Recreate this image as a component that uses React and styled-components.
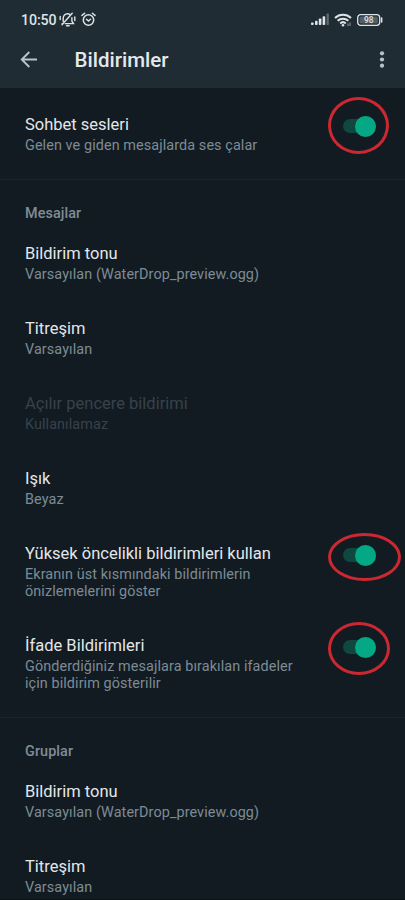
import styled, { createGlobalStyle } from "styled-components"

const GlobalStyle = createGlobalStyle`
  * {
    box-sizing: border-box;
  }

  body {
    margin: 0;
    background: #121b22;
    font-family: Roboto, "Noto Sans", sans-serif;
  }
`

const Screen = styled.div`
  display: flex;
  flex-direction: column;
  height: 900px;
  overflow: hidden;
  background: #121b22;
  border-bottom: 1px solid #0b1117;
`

const Header = styled.header`
  flex: none;
  height: 88px;
  background: #1f2c34;
`

const StatusBar = styled.div`
  display: flex;
  align-items: center;
  height: 38px;
  padding: 1px 22px 0 21px;
  color: #dde3e6;
`

const Clock = styled.span`
  width: 38px;
  font-size: 14.2px;
  font-weight: 500;
  letter-spacing: -0.1px;
  white-space: nowrap;
`

const StatusIcons = styled.div`
  display: flex;
  align-items: center;
  gap: ${({ $gap }) => $gap}px;
  margin-left: ${({ $end }) => ($end ? "auto" : 0)};
`

const Toolbar = styled.div`
  display: flex;
  align-items: center;
  height: 43px;
  padding: 0 20px;
  color: #b9c3c8;
`

const Title = styled.h1`
  flex: 1;
  margin: 0 0 0 36.5px;
  color: #e4e9ec;
  font-size: 20.5px;
  font-weight: 500;
  line-height: 24px;
`

const Section = styled.section`
  flex: none;
  padding: ${({ $first }) => ($first ? "8.5px 0 7.5px" : "0 0 7.5px")};
  border-bottom: 1px solid #1a242b;
`

const SectionTitle = styled.h2`
  margin: 0;
  padding: 24.5px 25px 4px;
  color: #7f8d97;
  font-size: 14.4px;
  font-weight: 500;
  letter-spacing: 0.08px;
  line-height: 17px;
`

const Row = styled.div`
  display: flex;
  justify-content: space-between;
  padding: 18px 29px 18px 25px;
`

const RowText = styled.div`
  width: 280px;
`

const RowTitle = styled.div`
  margin-bottom: 2.5px;
  color: ${({ $disabled }) => ($disabled ? "#37424a" : "#e2e7ea")};
  font-size: 16.5px;
  line-height: 19.5px;
  white-space: nowrap;
`

const RowSummary = styled.div`
  color: ${({ $disabled }) => ($disabled ? "#37424a" : "#7d8b94")};
  font-size: 14.4px;
  letter-spacing: 0.09px;
  line-height: 17px;
`

const Switch = styled.div`
  position: relative;
  display: flex;
  align-items: center;
  justify-content: flex-end;
  width: 33px;
  height: 21px;
  margin-top: 1px;

  &::before {
    content: "";
    width: 33px;
    height: 14px;
    border-radius: 7px;
    background: #0f483f;
  }
`

const Thumb = styled.span`
  position: absolute;
  right: 0;
  width: 21px;
  height: 21px;
  border-radius: 50%;
  background: #05a884;
`

// hand-drawn style ring laid over a switch
const Ring = styled.span`
  position: absolute;
  left: -15px;
  top: ${({ $top }) => $top}px;
  width: ${({ $width }) => $width}px;
  height: ${({ $height }) => $height}px;
  border: 3px solid #cb2832;
  border-radius: 50%;
`

const toneRow = { title: "Bildirim tonu", summary: "Varsayılan (WaterDrop_preview.ogg)" }
const vibrationRow = { title: "Titreşim", summary: "Varsayılan" }

const sections = [
  {
    rows: [
      {
        title: "Sohbet sesleri",
        summary: "Gelen ve giden mesajlarda ses çalar",
        ring: { top: -19, width: 61, height: 57 },
      },
    ],
  },
  {
    title: "Mesajlar",
    rows: [
      toneRow,
      vibrationRow,
      { title: "Açılır pencere bildirimi", summary: "Kullanılamaz", disabled: true },
      { title: "Işık", summary: "Beyaz" },
      {
        title: "Yüksek öncelikli bildirimleri kullan",
        summary: (
          <>
            Ekranın üst kısmındaki bildirimlerin
            <br />
            önizlemelerini göster
          </>
        ),
        ring: { top: -12, width: 73, height: 48 },
      },
      {
        title: "İfade Bildirimleri",
        summary: (
          <>
            Gönderdiğiniz mesajlara bırakılan ifadeler
            <br />
            için bildirim gösterilir
          </>
        ),
        ring: { top: -15, width: 62, height: 53 },
      },
    ],
  },
  { title: "Gruplar", rows: [toneRow, vibrationRow] },
]

const MutedBellIcon = () => (
  <svg width="17" height="15" viewBox="0 0 17 15" fill="none" stroke="currentColor" strokeWidth="1.4" strokeLinecap="round">
    <path d="M4.2 9.6V6.4c0-2.7 1.9-4.6 4.4-4.6 1 0 1.800.300 2.500.800M12.900 5.600v3.600l1.600 2.400H6.200" />
    <path d="M7.500 13.800h2.600M3 12.800 13.200 1.200M1.200 4.500v3M3.500 11.600h-.4M15.800 5v3.500" />
  </svg>
)

const AlarmIcon = () => (
  <svg width="15" height="15" viewBox="0 0 15 15" fill="none" stroke="currentColor" strokeWidth="1.5" strokeLinecap="round">
    <circle cx="7.5" cy="8" r="5.2" />
    <path d="M5.5 7.2 7.5 9l2-1.8M1 3.4 3.6 1.2M14 3.4l-2.6-2.2" />
  </svg>
)

const SignalIcon = () => (
  <svg width="18" height="13" viewBox="0 0 18 13" fill="currentColor">
    <rect x="0" y="9.5" width="2.6" height="2.5" rx="0.8" />
    <rect x="4" y="7.7" width="2.6" height="4.3" rx="0.8" />
    <rect x="7.8" y="5.5" width="2.6" height="6.5" rx="0.8" />
    <rect x="11.6" y="3.2" width="2.6" height="8.8" rx="0.8" />
    <rect x="15.6" y="0.6" width="2.2" height="11.4" rx="0.6" opacity="0.35" />
  </svg>
)

const WifiIcon = () => (
  <svg width="18" height="14" viewBox="0 0 18 14" fill="none" stroke="currentColor" strokeWidth="2">
    <path d="M1 4.900C5.500.700 12.500.700 17 4.900M3.600 7.800c3.100-2.900 7.700-2.900 10.800 0M6.200 10.400c1.600-1.500 4-1.500 5.600 0" />
    <circle cx="9" cy="12.300" r="1.300" fill="currentColor" stroke="none" />
    <path d="M14 13v-2.500M16 13V9.500" strokeWidth="1.200" opacity="0.500" />
  </svg>
)

const BatteryIcon = () => (
  <svg width="26" height="12" viewBox="0 0 26 12">
    <rect x="0.7" y="0.7" width="22" height="10.6" rx="3" fill="none" stroke="currentColor" strokeWidth="1.3" />
    <rect x="2.5" y="2.4" width="18.4" height="7.2" rx="1.5" fill="currentColor" opacity="0.28" />
    <path d="M24.6 4v4" stroke="currentColor" strokeWidth="1.6" strokeLinecap="round" />
    <text x="11.7" y="8.9" textAnchor="middle" fill="currentColor" fontSize="8.4" fontWeight="500">98</text>
  </svg>
)

const BackIcon = () => (
  <svg width="18" height="18" viewBox="0 0 18 18" fill="none" stroke="currentColor" strokeWidth="1.9">
    <path d="M17 8.500H2M9.300 1 1.800 8.500l7.500 7.500" />
  </svg>
)

const MoreIcon = () => (
  <svg width="6" height="18" viewBox="0 0 6 18" fill="currentColor">
    <circle cx="3" cy="2.3" r="2.1" />
    <circle cx="3" cy="8.5" r="2.1" />
    <circle cx="3" cy="14.7" r="2.1" />
  </svg>
)

const SettingRow = ({ title, summary, disabled, ring }) => (
  <Row>
    <RowText>
      <RowTitle $disabled={disabled}>{title}</RowTitle>
      <RowSummary $disabled={disabled}>{summary}</RowSummary>
    </RowText>
    {ring && (
      <Switch role="switch" aria-checked="true" aria-label={title}>
        <Thumb />
        <Ring $top={ring.top} $width={ring.width} $height={ring.height} />
      </Switch>
    )}
  </Row>
)

const App = () => {
  return (
    <>
      <GlobalStyle />
      <Screen>
        <Header>
          <StatusBar>
            <Clock>10:50</Clock>
            <StatusIcons $gap={5}>
              <MutedBellIcon />
              <AlarmIcon />
            </StatusIcons>
            <StatusIcons $gap={5} $end>
              <SignalIcon />
              <WifiIcon />
              <BatteryIcon />
            </StatusIcons>
          </StatusBar>
          <Toolbar>
            <BackIcon />
            <Title>Bildirimler</Title>
            <MoreIcon />
          </Toolbar>
        </Header>
        {sections.map((section, index) => (
          <Section key={index} $first={index === 0}>
            {section.title && <SectionTitle>{section.title}</SectionTitle>}
            {section.rows.map((row) => (
              <SettingRow key={row.title} {...row} />
            ))}
          </Section>
        ))}
      </Screen>
    </>
  )
}

export default App
